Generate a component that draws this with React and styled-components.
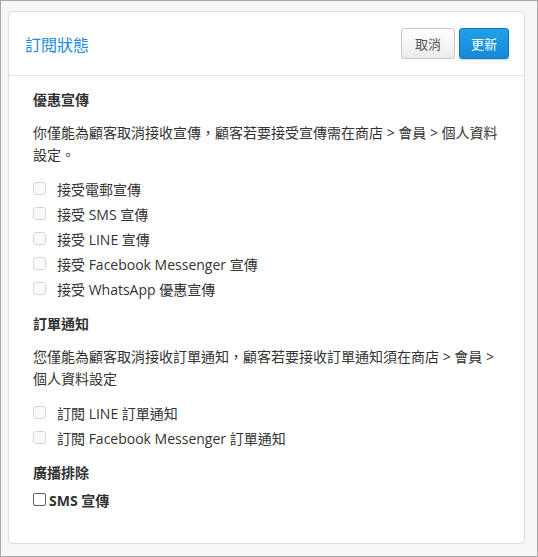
import React from "react"
import styled, { createGlobalStyle } from "styled-components"

const GlobalStyle = createGlobalStyle`
  html, body {
    margin: 0;
    padding: 0;
    background: #f7f7f7;
  }
  body {
    font-family: "Open Sans", "Noto Sans CJK TC", sans-serif;
    color: #333;
  }
`

const Frame = styled.div`
  box-sizing: border-box;
  width: 538px;
  height: 557px;
  border: 1px solid #a9a9a9;
  padding: 10px 12px 0 7px;
  background: #f7f7f7;
`

const Card = styled.div`
  background: #fff;
  border: 1px solid #dedede;
  border-radius: 4px;
`

const Header = styled.div`
  display: flex;
  align-items: center;
  justify-content: space-between;
  height: 63px;
  padding: 0 15px 0 16px;
  border-bottom: 1px solid #e3e3e3;
`

const Title = styled.h2`
  margin: 0;
  font-size: 16px;
  font-weight: normal;
  color: #1b8bd6;
`

const Actions = styled.div`
  display: flex;
  gap: 4px;
`

const Button = styled.button`
  box-sizing: border-box;
  height: 31px;
  padding: 0 ${p => (p.$primary ? "11px" : "13px")};
  font-family: "Open Sans", "Noto Sans CJK TC", sans-serif;
  font-size: 13px;
  border-radius: 3px;
  border: 1px solid ${p => (p.$primary ? "#1479bd" : "#c8c8c8")};
  color: ${p => (p.$primary ? "#fff" : "#555")};
  background: ${p =>
    p.$primary
      ? "linear-gradient(#22a0ea, #1689d6)"
      : "linear-gradient(#ffffff, #ececec)"};
  box-shadow: ${p => (p.$primary ? "0 1px 2px rgba(0,0,0,0.2)" : "none")};
`

const Body = styled.div`
  padding: 14px 24px 33px;
`

const Section = styled.div`
  & + & {
    margin-top: 13px;
  }
`

const SectionTitle = styled.h3`
  margin: 0 0 ${p => p.$gap || "12px"};
  font-size: 14px;
  line-height: 20px;
  font-weight: bold;
  color: #333;
`

const Desc = styled.p`
  margin: 0 0 10px;
  font-size: 14px;
  line-height: 22px;
  color: #333;
`

const CheckRow = styled.label`
  display: flex;
  align-items: center;
  gap: 11px;
  height: 25px;
  font-size: 14px;
  color: #333;
`

const Box = styled.span`
  box-sizing: border-box;
  width: 13px;
  height: 13px;
  border: 1px solid #d6d6d6;
  border-radius: 3px;
  background: #fafafa;
`

const ExcludeRow = styled.label`
  display: flex;
  align-items: center;
  gap: 3px;
  height: 21px;
  font-size: 14px;
  font-weight: bold;
  color: #333;
`

const NativeBox = styled.span`
  box-sizing: border-box;
  width: 13px;
  height: 13px;
  border: 1px solid #5f5f5f;
  border-radius: 2px;
  background: #fff;
`

const promo = [
  "接受電郵宣傳",
  "接受 SMS 宣傳",
  "接受 LINE 宣傳",
  "接受 Facebook Messenger 宣傳",
  "接受 WhatsApp 優惠宣傳",
]

const orders = ["訂閱 LINE 訂單通知", "訂閱 Facebook Messenger 訂單通知"]

export default function App() {
  return (
    <Frame>
      <GlobalStyle />
      <Card>
        <Header>
          <Title>訂閱狀態</Title>
          <Actions>
            <Button>取消</Button>
            <Button $primary>更新</Button>
          </Actions>
        </Header>
        <Body>
          <Section>
            <SectionTitle>優惠宣傳</SectionTitle>
            <Desc>
              你僅能為顧客取消接收宣傳，顧客若要接受宣傳需在商店 &gt; 會員 &gt; 個人資料設定。
            </Desc>
            {promo.map(t => (
              <CheckRow key={t}>
                <Box />
                {t}
              </CheckRow>
            ))}
          </Section>
          <Section>
            <SectionTitle>訂單通知</SectionTitle>
            <Desc>
              您僅能為顧客取消接收訂單通知，顧客若要接收訂單通知須在商店 &gt; 會員 &gt; 個人資料設定
            </Desc>
            {orders.map(t => (
              <CheckRow key={t}>
                <Box />
                {t}
              </CheckRow>
            ))}
          </Section>
          <Section>
            <SectionTitle $gap="6px">廣播排除</SectionTitle>
            <ExcludeRow>
              <NativeBox />
              SMS 宣傳
            </ExcludeRow>
          </Section>
        </Body>
      </Card>
    </Frame>
  )
}
